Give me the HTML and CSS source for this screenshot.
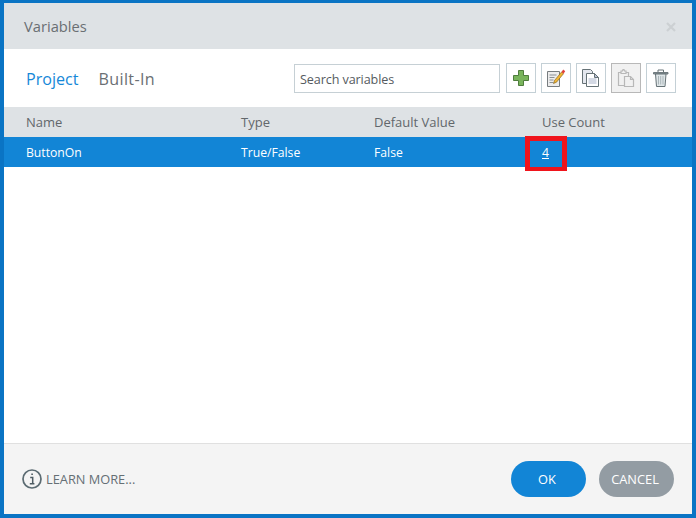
FILE: index.html
```html
<!DOCTYPE html>
<html lang="en">
<head>
<meta charset="utf-8">
<title>Variables</title>
<link rel="stylesheet" href="styles.css">
</head>
<body>
<div class="dialog">
  <header class="titlebar">
    <span class="title">Variables</span>
    <svg class="close" width="10" height="10" viewBox="0 0 10 10"><path d="M1 1l8 8M9 1l-8 8" stroke="#ccd0d3" stroke-width="2.2" fill="none"/></svg>
  </header>
  <div class="toolbar">
    <nav class="tabs">
      <span class="tab active">Project</span>
      <span class="tab builtin">Built-In</span>
    </nav>
    <div class="tools">
      <div class="search">Search variables</div>
      <button class="tool">
        <svg width="18" height="18" viewBox="0 0 18 18"><path d="M6.5 1.5h5v5h5v5h-5v5h-5v-5h-5v-5h5z" fill="#79b45c" stroke="#4f7d3d" stroke-width="1"/></svg>
      </button>
      <button class="tool">
        <svg width="20" height="20" viewBox="0 0 20 20"><path d="M1.500 3.500h12v15h-12z" fill="#ececec" stroke="#777c7f"/><path d="M3.500 7h7M3.500 9.500h5M3.500 12h4M3.500 14.500h4" stroke="#8b9094"/><path d="M7.500 15.500l1-3 7-8.500 2 1.700-7 8.500z" fill="#f2b632" stroke="#7a5a18" stroke-width=".6"/><path d="M15.500 4l1.700-2.500 2 1.700-1.700 2.500z" fill="#e0403a"/></svg>
      </button>
      <button class="tool">
        <svg width="20" height="20" viewBox="0 0 20 20"><path d="M1.500 1.500h8l2 2v12h-10z" fill="#e4e7ee" stroke="#667276"/><path d="M5.500 5.500h8l4 4v9h-12z" fill="#fff" stroke="#667276"/><path d="M13.500 5.500v4h4z" fill="#b9c0d6" stroke="#667276"/><path d="M7.500 11h8M7.500 13h8M7.500 15h8" stroke="#a9b3c9"/></svg>
      </button>
      <button class="tool disabled">
        <svg width="20" height="20" viewBox="0 0 20 20" fill="none" stroke="#b8b8b8" stroke-width="1.200"><path d="M2.500 4.500h10v13h-10z"/><path d="M5 5.500v-2.500h1.500l.5-1.500h1l.5 1.500h1.500v2.500z" fill="#f1f1f1"/><path d="M8.500 8.500h6l3 3v7h-9z" fill="#f1f1f1"/><path d="M14.500 8.500v3h3"/></svg>
      </button>
      <button class="tool">
        <svg width="18" height="20" viewBox="0 0 18 20"><path d="M1.500 4.500h14.500v1.500h-14.500z" fill="#8b969b" stroke="#667276" stroke-width=".9"/><path d="M6 4v-2h5.500v2" fill="none" stroke="#667276"/><path d="M3.500 6h10.500l-1 12.500h-8.500z" fill="#dfe6e8" stroke="#667276"/><path d="M6.500 8v8.500M8.700 8v8.500M11 8v8.500" stroke="#aab5b9"/></svg>
      </button>
    </div>
  </div>
  <div class="thead">
    <span class="c1">Name</span><span class="c2">Type</span><span class="c3">Default Value</span><span class="c4">Use Count</span>
  </div>
  <div class="row">
    <span class="c1">ButtonOn</span><span class="c2">True/False</span><span class="c3">False</span><span class="c4"><a class="count">4</a></span>
    <div class="highlight"></div>
  </div>
  <div class="body"></div>
  <footer class="footer">
    <div class="learn">
      <svg width="20" height="20" viewBox="0 0 20 20"><circle cx="10" cy="10" r="9" fill="none" stroke="#5b6b72" stroke-width="1.700"/><path d="M8.200 8.500h2.500v6M7.800 14.700h4.600M9.300 5.200h1.600" fill="none" stroke="#4e5c63" stroke-width="1.500"/></svg>
      <span>LEARN MORE...</span>
    </div>
    <div class="actions">
      <button class="btn ok">OK</button>
      <button class="btn cancel">CANCEL</button>
    </div>
  </footer>
</div>
</body>
</html>
```
FILE: styles.css
```css
* { box-sizing: border-box; }
html, body { margin: 0; padding: 0; }
body { width: 696px; height: 518px; font-family: "Open Sans", "Noto Sans", sans-serif; overflow: hidden; }
.dialog { width: 696px; height: 518px; border: 4px solid #0a74c4; border-top-width: 3px; display: flex; flex-direction: column; background: #fff; }
.titlebar { height: 46px; flex: none; background: #dee2e5; display: flex; align-items: center; justify-content: space-between; padding: 0 16px 0 20px; }
.title { font-size: 14.700px; color: #6a6f73; }
.close { margin-top: 1px; }
.toolbar { height: 58px; flex: none; display: flex; align-items: center; justify-content: space-between; padding: 0 16px 0 22px; }
.tabs { display: flex; gap: 20px; padding-top: 1px; }
.tab { font-size: 16.100px; color: #6a6f73; }
.tab.active { color: #1588d8; }
.tab.builtin { letter-spacing: 0.35px; }
.tools { display: flex; gap: 5px; align-items: center; }
.search { width: 206px; height: 29px; border: 1px solid #c6d0d5; padding-left: 5px; margin-right: 1px; font-size: 12.600px; letter-spacing: -0.1px; line-height: 29px; color: #555a5e; }
.tool { width: 30px; height: 30px; padding: 0; background: #fff; border: 1px solid #c4d0d6; display: flex; align-items: center; justify-content: center; }
.tool.disabled { background: #f1f1f1; border-color: #b8b8b8; }
.thead, .row { flex: none; height: 30px; position: relative; display: grid; grid-template-columns: 215px 133px 168px 1fr; padding-left: 22px; align-items: center; }
.thead { background: #dee2e5; color: #62676b; font-size: 13px; }
.row { background: #1285d6; color: #fff; font-size: 12.200px; }
.count { text-decoration: underline; }
.highlight { position: absolute; left: 521px; top: -1px; width: 42px; height: 35px; border: 5px solid #f0141c; border-bottom-width: 4px; }
.body { flex: 1; }
.footer { height: 71px; flex: none; background: #f4f4f4; border-top: 1px solid #e0e0e0; display: flex; align-items: center; justify-content: space-between; padding: 0 18px; }
.learn { display: flex; align-items: center; gap: 4px; font-size: 12.800px; color: #656f75; }
.actions { display: flex; gap: 13px; }
.btn { width: 75px; height: 36px; border: 0; padding: 0 3px 0 0; border-radius: 18px; color: #fff; font: 500 12.800px "Open Sans", "Noto Sans", sans-serif; }
.ok { background: #1285d6; }
.cancel { background: #939ca3; }
```
